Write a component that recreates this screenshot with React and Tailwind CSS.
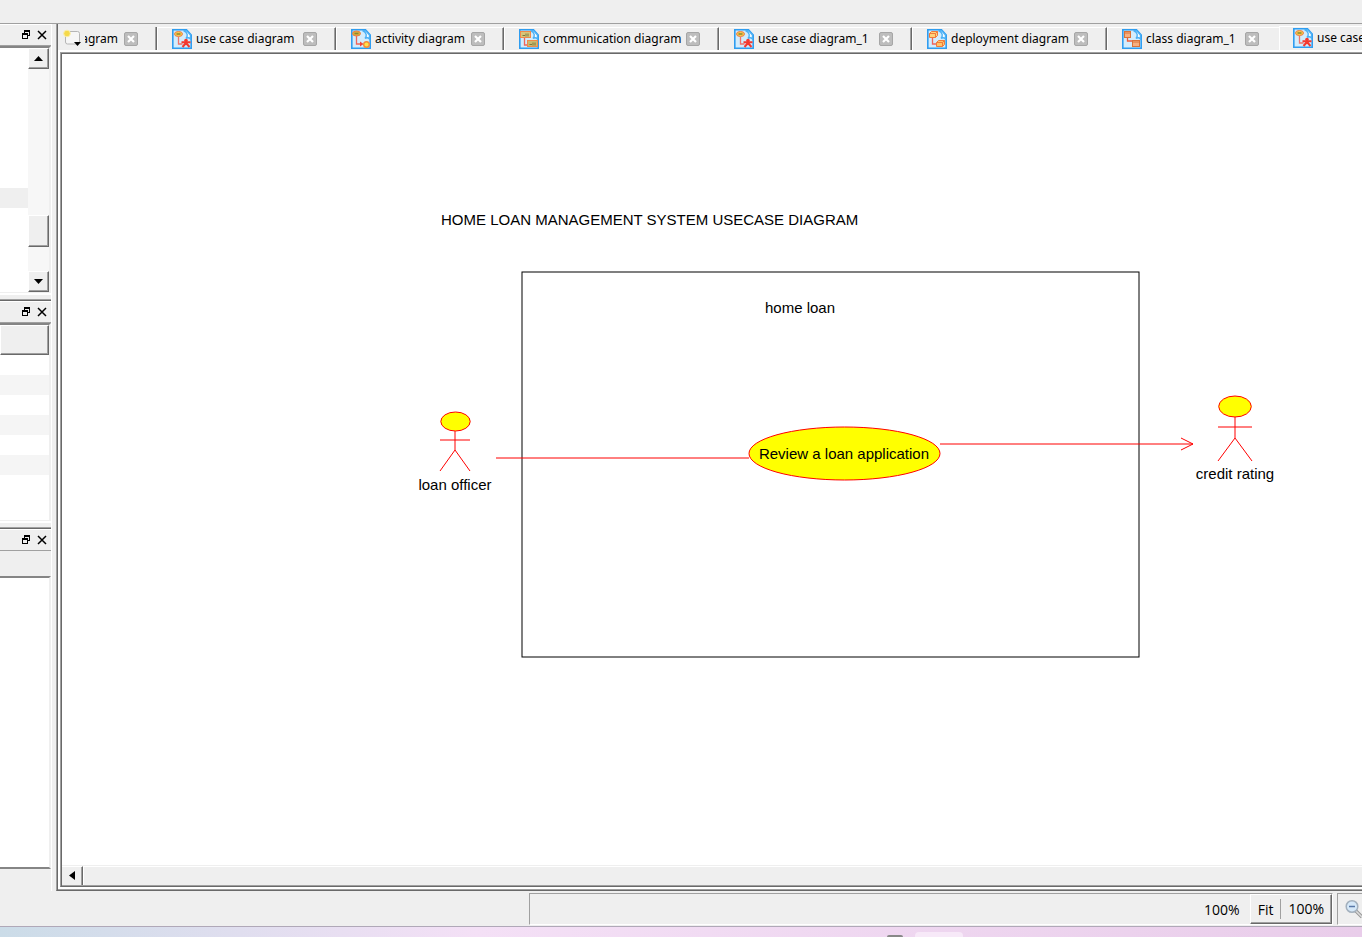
import React from "react";

const NODE_ART = {
  usecase: (
    <g>
      <ellipse cx="6.500" cy="5" rx="4" ry="2.500" fill="#f7cf4e" stroke="#ee7a44" />
      <path d="M4.500 5h4" stroke="#8a8432" strokeWidth="1.500" />
      <path d="M6.500 8v7h4" fill="none" stroke="#f0736a" strokeWidth="1.300" />
      <path d="M9.500 13.200h9M14 11v4M14 14l-3.500 4M14 14l3.500 4" stroke="#f4382e" strokeWidth="2" fill="none" />
      <circle cx="14" cy="11.500" r="1.800" fill="#f4382e" />
    </g>
  ),
  activity: (
    <g>
      <ellipse cx="5.500" cy="4.500" rx="4" ry="2.500" fill="#d9b13a" stroke="#ee7a40" />
      <path d="M3.500 4.500h4" stroke="#8a8432" strokeWidth="1.500" />
      <path d="M5.500 7v8h5" fill="none" stroke="#f0645a" strokeWidth="1.300" />
      <path d="M9 12.500l3.500 2.500-3.500 2.500z" fill="#f0443a" />
      <circle cx="15.500" cy="15.500" r="2.800" fill="#ffe14a" stroke="#f58a3a" strokeWidth="1.400" />
    </g>
  ),
  communication: (
    <g>
      <rect x="1.500" y="2.500" width="10" height="6" fill="#d8c67a" stroke="#f08a4a" />
      <path d="M3.500 6.500h2.500M7 4.500v3M9 4.500v3" stroke="#7a7a3a" />
      <path d="M5.500 9v7h4" fill="none" stroke="#f0645a" strokeWidth="1.300" />
      <rect x="8.500" y="11.500" width="10" height="6" fill="#c9ba70" stroke="#f08a4a" />
      <path d="M10.500 15.500h2.500M14 13.500v3M16 13.500v3" stroke="#7a7a3a" />
    </g>
  ),
  deployment: (
    <g>
      <path d="M2.500 4.500l2-2h6v4l-2 2h-6z" fill="#ffd27a" stroke="#f07a3a" />
      <path d="M2.500 4.500h6v4M8.500 4.500l2-2" fill="none" stroke="#f07a3a" />
      <path d="M5.500 9v6h4" fill="none" stroke="#f0645a" strokeWidth="1.300" />
      <path d="M9.500 13.500l2-2h6v4l-2 2h-6z" fill="#ffc46a" stroke="#f07a3a" />
      <path d="M9.500 13.500h6v4M15.500 13.500l2-2" fill="none" stroke="#f07a3a" />
    </g>
  ),
  class: (
    <g>
      <rect x="2.500" y="2.500" width="6" height="6" fill="#f7b080" stroke="#d9733a" />
      <path d="M2.500 4h6" stroke="#d9733a" />
      <path d="M5.500 9v3h5" fill="none" stroke="#ee5a3a" strokeWidth="1.300" />
      <rect x="10.500" y="11.500" width="7" height="6" fill="#f7b080" stroke="#d9733a" />
      <path d="M10.500 13h7" stroke="#d9733a" />
    </g>
  ),
};

function DiagramIcon({ kind }) {
  return (
    <svg width="20" height="20" viewBox="0 0 20 20" className="shrink-0" aria-hidden="true">
      <path d="M.8 .8H14.500L19.200 6V19.200H.8z" fill="#d3ecfc" stroke="#2f9df0" strokeWidth="1.600" />
      <path d="M11.500 1.600H14.500L18.500 6V10c-1.500-1.500-3-1.500-4.500-.5 2-2.500 2-6-2.500-7.900z" fill="#f4fbff" stroke="#4bb0f5" strokeWidth="1.400" />
      {NODE_ART[kind]}
    </svg>
  );
}

function CloseTab({ name }) {
  return (
    <button type="button" aria-label={"Close " + name} className="ml-auto size-[14px] shrink-0">
      <svg width="14" height="14" viewBox="0 0 14 14">
        <rect x=".5" y=".5" width="13" height="13" rx="1.500" fill="#bdbdbd" stroke="#a6a6a6" />
        <path d="M4 4l6 6M10 4l-6 6" stroke="#fff" strokeWidth="2.200" />
      </svg>
    </button>
  );
}

const RAISED =
  "border border-t-white border-l-white border-r-[#696969] border-b-[#696969] shadow-[inset_-1px_-1px_0_#a0a0a0] bg-[#efefef]";

const TABS = [
  { label: "use case diagram", kind: "usecase", width: "w-[179px]" },
  { label: "activity diagram", kind: "activity", width: "w-[168px]" },
  { label: "communication diagram", kind: "communication", width: "w-[215px]" },
  { label: "use case diagram_1", kind: "usecase", width: "w-[193px]" },
  { label: "deployment diagram", kind: "deployment", width: "w-[195px]" },
];

function Tab({ label, kind, width }) {
  return (
    <div className={"flex shrink-0 items-center border-t border-r border-l border-t-white border-r-[#696969] border-l-white pr-[18px] pl-[14px] shadow-[inset_-1px_0_0_#a0a0a0] " + width}>
      <button type="button" className="flex items-center gap-1 whitespace-nowrap">
        <DiagramIcon kind={kind} />
        {label}
      </button>
      <CloseTab name={label} />
    </div>
  );
}

function TabBar() {
  return (
    <div className="flex h-[26px] shrink-0 overflow-hidden pt-[3px] font-['Noto_Sans','Open_Sans',sans-serif] text-[12px]">
      <div className="flex w-[99px] shrink-0 items-center border-r border-[#696969] pr-[18px] pl-1 shadow-[inset_-1px_0_0_#a0a0a0]">
        <button type="button" aria-label="New diagram" className="mr-[3px] shrink-0">
          <svg width="20" height="20" viewBox="0 0 20 20">
            <rect x="3.500" y="2.500" width="14" height="12.500" rx="2" fill="#f6f6f6" stroke="#b5b5b5" />
            <circle cx="5" cy="4.500" r="3.300" fill="#f5d94a" stroke="#fbeea8" />
            <path d="M12 13h7l-3.500 4z" fill="#000" />
          </svg>
        </button>
        <div className="flex w-[33px] justify-end overflow-hidden whitespace-nowrap">
          <span>class diagram</span>
        </div>
        <CloseTab name="class diagram" />
      </div>
      {TABS.map((t) => (
        <Tab key={t.label} {...t} />
      ))}
      <div className="flex w-[172px] shrink-0 items-center border-t border-l border-white pr-5 pl-[14px]">
        <button type="button" className="flex items-center gap-1 whitespace-nowrap">
          <DiagramIcon kind="class" />
          class diagram_1
        </button>
        <CloseTab name="class diagram_1" />
      </div>
      <div className="-mt-px flex shrink-0 items-center border-t border-l border-white pb-px pl-[13px]">
        <button type="button" className="flex items-center gap-1 whitespace-nowrap">
          <DiagramIcon kind="usecase" />
          use case diagram_2
        </button>
      </div>
    </div>
  );
}

function DockHeader({ name }) {
  return (
    <div className="flex h-[22px] shrink-0 items-center justify-end gap-1 border-t border-b border-t-white border-b-[#a0a0a0] pr-[3px] pb-px">
      <button type="button" aria-label={"Float " + name} className="size-[12px]">
        <svg width="12" height="12" viewBox="0 0 12 12" shapeRendering="crispEdges">
          <path d="M4 1h6v6h-2v-1h1V3H5v1H4zM2 4h6v6H2zM3 6v3h4V6z" fill="#000" fillRule="evenodd" />
        </svg>
      </button>
      <button type="button" aria-label={"Close " + name} className="size-[12px]">
        <svg width="12" height="12" viewBox="0 0 12 12">
          <path d="M2 2l8 8M10 2l-8 8" stroke="#000" strokeWidth="1.500" />
        </svg>
      </button>
    </div>
  );
}

function ScrollArrow({ label, d }) {
  return (
    <button type="button" aria-label={label} className={"flex size-[21px] shrink-0 items-center justify-center " + RAISED}>
      <svg width="9" height="9" viewBox="0 0 9 9">
        <path d={d} fill="#000" />
      </svg>
    </button>
  );
}

function Splitter() {
  return (
    <div className="h-2 shrink-0 border-t-2 border-b border-t-white border-b-[#696969] shadow-[inset_0_-1px_0_#a0a0a0]" />
  );
}

function LeftDock() {
  return (
    <aside className="flex w-[52px] shrink-0 flex-col border-r border-white">
      <DockHeader name="explorer" />
      <div className="flex h-[247px] shrink-0 border-t-2 border-r-2 border-b border-t-[#858585] border-r-[#efefef] border-b-[#efefef] bg-white">
        <div className="grow pt-[140px]">
          <div className="h-5 bg-[#efefef]" />
        </div>
        <div className="flex w-[21px] shrink-0 flex-col bg-[#f7f7f7]">
          <ScrollArrow label="Scroll up" d="M0 7l4.500-5 4.500 5z" />
          <div className="grow pt-[146px]">
            <div className={"h-8 " + RAISED} />
          </div>
          <ScrollArrow label="Scroll down" d="M0 2l4.500 5 4.500-5z" />
        </div>
      </div>
      <Splitter />
      <DockHeader name="properties" />
      <div className="h-[198px] shrink-0 border-t-2 border-r-2 border-b border-t-[#858585] border-r-[#efefef] border-b-[#efefef] bg-white">
        <div className={"h-[30px] " + RAISED} />
        <div className="h-5" />
        <div className="h-5 bg-[#f5f5f5]" />
        <div className="h-5" />
        <div className="h-5 bg-[#f5f5f5]" />
        <div className="h-5" />
        <div className="h-5 bg-[#f5f5f5]" />
      </div>
      <Splitter />
      <DockHeader name="documentation" />
      <div className="h-[25px] shrink-0" />
      <div className="mb-[22px] grow border-t-2 border-r-2 border-b-2 border-t-[#858585] border-r-[#efefef] border-b-[#858585] bg-white" />
    </aside>
  );
}

function Diagram() {
  return (
    <svg width="1300" height="811" viewBox="0 0 1300 811" className="font-['Liberation_Sans',Arial,sans-serif] text-[15px]">
      <rect x="460" y="218" width="617" height="385" fill="none" stroke="#000" />
      <g stroke="#f00" fill="none">
        <ellipse cx="393.500" cy="367.500" rx="14.700" ry="9.500" fill="#ff0" />
        <path d="M393 377V396M378 386H408M393 396L378 417M393 396L408 417" />
        <path d="M434 404H687" />
        <ellipse cx="782.500" cy="399.500" rx="95.500" ry="26.500" fill="#ff0" />
        <path d="M878 390H1131M1119 384L1131 390L1119 396" />
        <ellipse cx="1173" cy="352.500" rx="16.300" ry="10.500" fill="#ff0" />
        <path d="M1173 363V384M1156 373H1190M1173 384L1156 407M1173 384L1190 407" />
      </g>
      <text x="379" y="171">HOME LOAN MANAGEMENT SYSTEM USECASE DIAGRAM</text>
      <text x="738" y="259" textAnchor="middle">home loan</text>
      <text x="393" y="436" textAnchor="middle">loan officer</text>
      <text x="782" y="405" textAnchor="middle">Review a loan application</text>
      <text x="1173" y="425" textAnchor="middle">credit rating</text>
    </svg>
  );
}

function StatusBar() {
  return (
    <footer className="flex h-[35px] shrink-0 gap-1 pt-[2px] pb-px font-['Open_Sans','Noto_Sans',sans-serif] text-[14px]">
      <div className="ml-[529px] flex grow items-stretch justify-end border border-t-[#a0a0a0] border-r-white border-b-white border-l-[#a0a0a0]">
        <span className="flex items-center pr-[10px]">100%</span>
        <div className={"flex items-center pr-px " + RAISED}>
          <button type="button" className="px-[7px]">Fit</button>
          <button type="button" className="border-l border-[#a0a0a0] pr-[6px] pl-[7px] leading-[20px]">100%</button>
        </div>
      </div>
      <div className="w-[25px] shrink-0 overflow-hidden border border-r-0 border-t-[#a0a0a0] border-b-white border-l-[#a0a0a0] pt-[5px] pl-[7px]">
        <button type="button" aria-label="Zoom out">
          <svg width="20" height="20" viewBox="0 0 20 20">
            <path d="M11 12l6 6" stroke="#999" strokeWidth="3.500" />
            <path d="M11 12l6 6" stroke="#ddd" strokeWidth="1.500" />
            <circle cx="7" cy="7.500" r="5.800" fill="#d5e8f8" stroke="#a3b0bd" strokeWidth="1.500" />
            <path d="M4 7.500h6" stroke="#5878a8" strokeWidth="1.500" />
          </svg>
        </button>
      </div>
    </footer>
  );
}

export default function App() {
  return (
    <div className="flex h-screen flex-col overflow-hidden bg-[#efefef] text-black">
      <header className="h-6 shrink-0 border-b border-[#a0a0a0]" />
      <div className="flex min-h-0 grow">
        <LeftDock />
        <main className="ml-1 flex min-w-0 grow flex-col border-b border-l border-b-[#696969] border-l-[#a0a0a0] pb-px pl-px shadow-[inset_1px_0_0_#696969,inset_0_-1px_0_#a0a0a0]">
          <TabBar />
          <div className="flex min-h-0 grow flex-col border-t-2 border-b-2 border-l-2 border-white">
            <div className="flex min-h-0 grow flex-col border-t border-b border-l border-t-[#a0a0a0] border-b-[#696969] border-l-[#a0a0a0] bg-white pt-px pb-px pl-px shadow-[inset_1px_1px_0_#696969,inset_0_-1px_0_#a0a0a0]">
              <div className="min-h-0 grow overflow-hidden">
                <Diagram />
              </div>
              <div className="flex h-5 shrink-0 border-t border-[#efefef]">
                <button type="button" aria-label="Scroll left" className="flex w-[21px] shrink-0 items-center justify-center border-t border-r border-t-white border-r-[#696969] bg-[#efefef] pb-px shadow-[inset_-1px_0_0_#a0a0a0]">
                  <svg width="6" height="9" viewBox="0 0 6 9">
                    <path d="M6 0v9L0 4.500z" fill="#000" />
                  </svg>
                </button>
                <div className="grow border-t border-l border-white bg-[#efefef]" />
              </div>
            </div>
          </div>
        </main>
      </div>
      <StatusBar />
      <div className="flex h-[11px] shrink-0 items-end justify-center overflow-hidden border-t border-[#b0a8b8] bg-linear-to-r from-[#cbdce8] via-[#f4e0f6] via-35% to-[#e9cdea]">
        <div className="ml-[488px] flex items-end gap-3">
          <div className="h-[2px] w-4 rounded-t-full bg-[#888]" />
          <div className="h-[5px] w-12 rounded-t-sm bg-[#f7e9f8]" />
        </div>
      </div>
    </div>
  );
}
